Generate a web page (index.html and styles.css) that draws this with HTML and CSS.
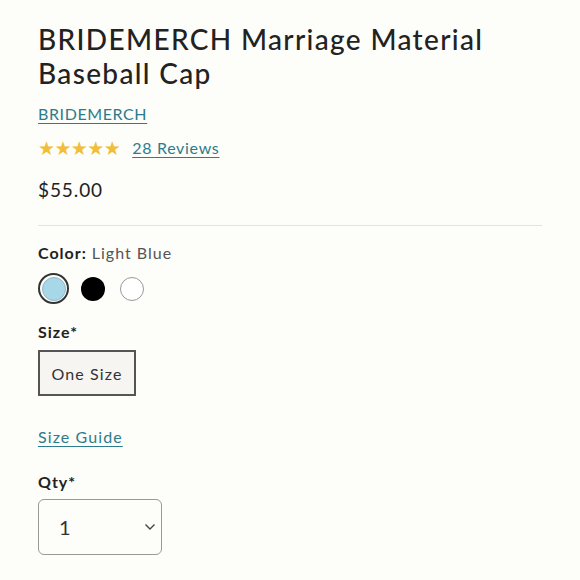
FILE: index.html
```html
<!DOCTYPE html>
<html>
<head>
<meta charset="utf-8">
<link rel="stylesheet" href="styles.css">
</head>
<body>
<div class="product">
  <h1 class="title">BRIDEMERCH Marriage Material Baseball Cap</h1>
  <a class="link brand" href="#">BRIDEMERCH</a>
  <div class="rating">
    <span class="stars">★★★★★</span>
    <a class="link reviews" href="#">28 Reviews</a>
  </div>
  <div class="price">$55.00</div>
  <hr class="divider">
  <div class="label">Color: <span class="value">Light Blue</span></div>
  <div class="swatches">
    <span class="swatch selected"><span class="dot blue"></span></span>
    <span class="swatch"><span class="dot black"></span></span>
    <span class="swatch"><span class="dot white"></span></span>
  </div>
  <div class="label strong">Size*</div>
  <div class="sizes"><button class="size-btn">One Size</button></div>
  <a class="link guide" href="#">Size Guide</a>
  <div class="label strong qty-label">Qty*</div>
  <div class="select">
    <span class="select-value">1</span>
    <svg class="chev" width="12" height="8" viewBox="0 0 12 8"><path d="M1.5 1.5 L6 6 L10.5 1.5" fill="none" stroke="#444" stroke-width="1.4"/></svg>
  </div>
</div>
</body>
</html>
```

FILE: styles.css
```css
html, body { margin: 0; padding: 0; }
body {
  background: #fdfdf9;
  font-family: Lato, "Noto Sans", sans-serif;
  color: #222;
}
.product {
  padding: 22px 38px 0 38px;
  width: 504px;
  display: flex;
  flex-direction: column;
  align-items: flex-start;
}
.title {
  margin: 0;
  font-size: 28px;
  font-weight: 500;
  line-height: 34px;
  letter-spacing: 1.35px;
  color: #222;
}
.link {
  color: #2b7c8c;
  font-size: 16px;
  text-decoration: underline;
  text-underline-offset: 3px;
  letter-spacing: 1.1px;
}
.brand { margin-top: 14px; line-height: 20px; letter-spacing: 0.6px; }
.reviews { letter-spacing: 0.7px; }
.rating {
  margin-top: 14px;
  display: flex;
  align-items: center;
  gap: 12px;
  line-height: 20px;
}
.stars {
  color: #f0be38;
  font-family: "DejaVu Sans", sans-serif;
  font-size: 19px;
  letter-spacing: -0.6px;
}
.price {
  margin-top: 20px;
  font-size: 19px;
  line-height: 24px;
  letter-spacing: 0.9px;
  color: #222;
}
.divider {
  align-self: stretch;
  border: 0;
  border-top: 1px solid #e4e4df;
  margin: 23px 0 0 0;
}
.label {
  margin-top: 17px;
  font-size: 16px;
  line-height: 20px;
  letter-spacing: 1px;
  font-weight: 700;
  color: #222;
}
.value { font-weight: 400; color: #555; }
.swatches {
  margin-top: 10px;
  display: flex;
  align-items: center;
  gap: 8px;
}
.swatch {
  width: 29px;
  height: 29px;
  border-radius: 50%;
  display: flex;
  align-items: center;
  justify-content: center;
  border: 1px solid transparent;
}
.swatch.selected { border: 2px solid #333; width: 27px; height: 27px; }
.dot {
  width: 24px;
  height: 24px;
  border-radius: 50%;
  box-sizing: border-box;
}
.dot.blue { background: #a8d8e8; border: 1px solid #8fb8c8; }
.dot.black { background: #000; }
.dot.white { background: #fff; border: 1px solid #999; }
.label.strong { margin-top: 18px; }
.sizes { margin-top: 8px; }
.size-btn {
  width: 98px;
  height: 46px;
  border: 2px solid #555;
  background: #f6f5f2;
  font-family: inherit;
  font-size: 16px;
  letter-spacing: 1.1px;
  color: #333;
  padding: 0;
}
.guide { margin-top: 31px; line-height: 20px; }
.label.qty-label { margin-top: 25px; }
.select {
  margin-top: 7px;
  width: 124px;
  height: 56px;
  box-sizing: border-box;
  border: 1px solid #999;
  border-radius: 6px;
  display: flex;
  align-items: center;
  justify-content: space-between;
  padding: 0 5px 0 20px;
}
.select-value { font-size: 20px; color: #333; }
```
